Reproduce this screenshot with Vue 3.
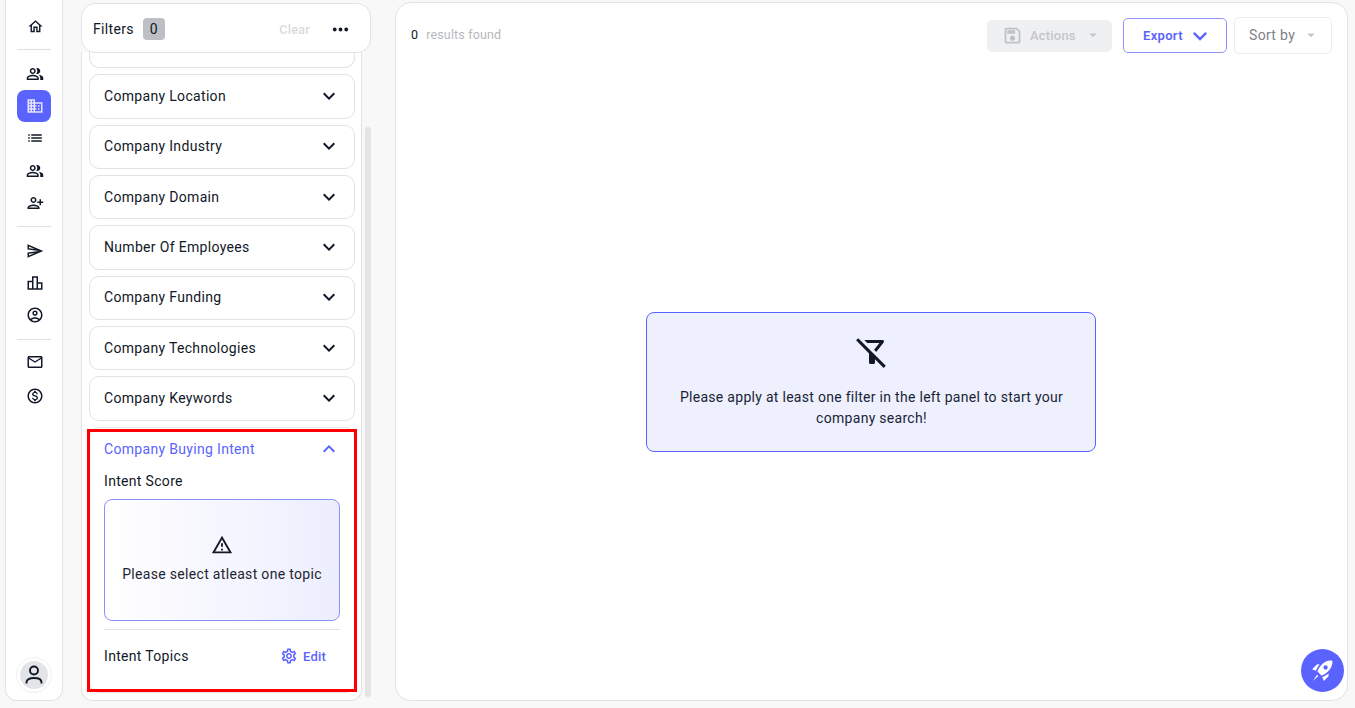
<script setup>
const P = {
  home: 'M12 5.69l5 4.5V18h-2v-6H9v6H7v-7.81l5-4.5M12 3L2 12h3v8h6v-6h2v6h6v-8h3L12 3z',
  people: 'M16.67 13.13C18.04 14.06 19 15.32 19 17v3h4v-3c0-2.18-3.57-3.47-6.33-3.87zM15 12c2.21 0 4-1.79 4-4s-1.79-4-4-4c-.47 0-.91.1-1.33.24C14.5 5.27 15 6.58 15 8s-.5 2.73-1.33 3.76c.42.14.86.24 1.33.24zM9 12c2.21 0 4-1.79 4-4s-1.79-4-4-4-4 1.79-4 4 1.79 4 4 4zm0-6c1.1 0 2 .9 2 2s-.9 2-2 2-2-.9-2-2 .9-2 2-2zM9 13c-2.67 0-8 1.34-8 4v3h16v-3c0-2.66-5.33-4-8-4zm6 5H3v-.99C3.2 16.29 6.3 15 9 15s5.8 1.29 6 2z',
  domain: 'M12 7V3H2v18h20V7H12zM6 19H4v-2h2v2zm0-4H4v-2h2v2zm0-4H4V9h2v2zm0-4H4V5h2v2zm4 12H8v-2h2v2zm0-4H8v-2h2v2zm0-4H8V9h2v2zm0-4H8V5h2v2zm10 12h-8v-2h2v-2h-2v-2h2v-2h-2V9h8v10zm-2-8h-2v2h2v-2zm0 4h-2v2h2v-2z',
  list: 'M3 13h2v-2H3v2zm0 4h2v-2H3v2zm0-8h2V7H3v2zm4 4h14v-2H7v2zm0 4h14v-2H7v2zM7 7v2h14V7H7z',
  add: 'M10 12c2.21 0 4-1.79 4-4s-1.79-4-4-4-4 1.79-4 4 1.79 4 4 4zm0-6c1.1 0 2 .9 2 2s-.9 2-2 2-2-.9-2-2 .9-2 2-2zm0 8c-2.67 0-8 1.34-8 4v2h16v-2c0-2.66-5.33-4-8-4zm-6 4c.22-.72 3.31-2 6-2 2.7 0 5.8 1.29 6 2H4zm16-3v-3h3v-2h-3V7h-2v3h-3v2h3v3h2z',
  send: 'M4.01 6.03l7.51 3.22-7.52-1 .01-2.22m7.5 8.72L4 17.97v-2.22l7.51-1M2.01 3L2 10l15 2-15 2 .01 7L23 12 2.01 3z',
  chart: 'M16 11V3H8v6H2v12h20V11h-6zm-6-6h4v14h-4V5zm-6 6h4v8H4v-8zm16 8h-4v-6h4v6z',
  account: 'M12 2C6.48 2 2 6.48 2 12s4.48 10 10 10 10-4.48 10-10S17.52 2 12 2zM7.35 18.5C8.66 17.56 10.26 17 12 17s3.34.56 4.65 1.5c-1.31.94-2.91 1.5-4.65 1.5s-3.34-.56-4.65-1.5zm10.79-1.38C16.45 15.8 14.32 15 12 15s-4.45.8-6.14 2.12C4.7 15.73 4 13.95 4 12c0-4.42 3.58-8 8-8s8 3.58 8 8c0 1.95-.7 3.73-1.86 5.12zM12 6c-1.93 0-3.5 1.57-3.5 3.5S10.07 13 12 13s3.5-1.57 3.5-3.5S13.93 6 12 6zm0 5c-.83 0-1.5-.67-1.5-1.5S11.17 8 12 8s1.5.67 1.5 1.5S12.83 11 12 11z',
  mail: 'M22 6c0-1.1-.9-2-2-2H4c-1.1 0-2 .9-2 2v12c0 1.1.9 2 2 2h16c1.1 0 2-.9 2-2V6zm-2 0l-8 5-8-5h16zm0 12H4V8l8 5 8-5v10z',
  money: 'M12 2C6.48 2 2 6.48 2 12s4.48 10 10 10 10-4.48 10-10S17.52 2 12 2zm0 18c-4.41 0-8-3.59-8-8s3.59-8 8-8 8 3.59 8 8-3.59 8-8 8zm.31-8.86c-1.77-.45-2.34-.94-2.34-1.67 0-.84.79-1.43 2.1-1.43 1.38 0 1.9.66 1.94 1.64h1.71c-.05-1.34-.87-2.57-2.49-2.97V5H10.9v1.69c-1.51.32-2.72 1.3-2.72 2.81 0 1.79 1.49 2.69 3.66 3.21 1.95.46 2.34 1.15 2.34 1.87 0 .53-.39 1.39-2.1 1.39-1.6 0-2.23-.72-2.32-1.64H8.04c.1 1.7 1.36 2.66 2.86 2.97V19h2.34v-1.67c1.52-.29 2.72-1.16 2.73-2.77-.01-2.2-1.9-2.96-3.66-3.42z',
  down: 'M16.59 8.59L12 13.17 7.41 8.59 6 10l6 6 6-6z',
  up: 'M12 8l-6 6 1.41 1.41L12 10.83l4.59 4.58L18 14z',
  caret: 'M7 10l5 5 5-5z',
  filterOff: 'M16.95 6l-3.57 4.55 1.43 1.43c1.03-1.31 4.98-6.37 4.98-6.37C20.3 4.95 19.83 4 19 4H6.83l2 2h8.12zM2.81 2.81 1.39 4.22 10 13v6c0 .55.45 1 1 1h2c.55 0 1-.45 1-1v-2.17l5.78 5.78 1.41-1.41L2.81 2.81z',
  warn: 'M12 5.99L19.53 19H4.47L12 5.99M12 2L1 21h22L12 2zm1 14h-2v2h2v-2zm0-6h-2v4h2v-4z',
  gear: 'M19.43 12.98c.04-.32.07-.64.07-.98 0-.34-.03-.66-.07-.98l2.11-1.65c.19-.15.24-.42.12-.64l-2-3.46c-.09-.16-.26-.25-.44-.25-.06 0-.12.01-.17.03l-2.49 1c-.52-.4-1.08-.73-1.69-.98l-.38-2.65C14.46 2.18 14.25 2 14 2h-4c-.25 0-.46.18-.49.42l-.38 2.65c-.61.25-1.17.59-1.69.98l-2.49-1c-.06-.02-.12-.03-.18-.03-.17 0-.34.09-.43.25l-2 3.46c-.13.22-.07.49.12.64l2.11 1.65c-.04.32-.07.65-.07.98 0 .33.03.66.07.98l-2.11 1.65c-.19.15-.24.42-.12.64l2 3.46c.09.16.26.25.44.25.06 0 .12-.01.17-.03l2.49-1c.52.4 1.08.73 1.69.98l.38 2.65c.03.24.24.42.49.42h4c.25 0 .46-.18.49-.42l.38-2.65c.61-.25 1.17-.59 1.69-.98l2.49 1c.06.02.12.03.18.03.17 0 .34-.09.43-.25l2-3.46c.12-.22.07-.49-.12-.64l-2.11-1.65zm-1.98-1.71c.04.31.05.52.05.73 0 .21-.02.43-.05.73l-.14 1.13.89.7 1.08.84-.7 1.21-1.27-.51-1.04-.42-.9.68c-.43.32-.84.56-1.25.73l-1.06.43-.16 1.13-.2 1.35h-1.4l-.19-1.35-.16-1.13-1.06-.43c-.43-.18-.83-.41-1.23-.71l-.91-.7-1.06.43-1.27.51-.7-1.21 1.08-.84.89-.7-.14-1.13c-.03-.31-.05-.54-.05-.74s.02-.43.05-.73l.14-1.13-.89-.7-1.08-.84.7-1.21 1.27.51 1.04.42.9-.68c.43-.32.84-.56 1.25-.73l1.06-.43.16-1.13.2-1.35h1.39l.19 1.35.16 1.13 1.06.43c.43.18.83.41 1.23.71l.91.7 1.06-.43 1.27-.51.7 1.21-1.07.85-.89.7.14 1.13zM12 8c-2.21 0-4 1.79-4 4s1.79 4 4 4 4-1.79 4-4-1.79-4-4-4zm0 6c-1.1 0-2-.9-2-2s.9-2 2-2 2 .9 2 2-.9 2-2 2z',
  save: 'M17 3H5c-1.11 0-2 .9-2 2v14c0 1.1.89 2 2 2h14c1.1 0 2-.9 2-2V7l-4-4zm2 16H5V5h11.17L19 7.83V19zm-7-7c-1.66 0-3 1.34-3 3s1.34 3 3 3 3-1.34 3-3-1.34-3-3-3zM6 6h9v4H6z',
  dots: 'M6 10c-1.1 0-2 .9-2 2s.9 2 2 2 2-.9 2-2-.9-2-2-2zm12 0c-1.1 0-2 .9-2 2s.9 2 2 2 2-.9 2-2-.9-2-2-2zm-6 0c-1.1 0-2 .9-2 2s.9 2 2 2 2-.9 2-2-.9-2-2-2z',
  rocket: 'M9.19 6.35c-2.04 2.29-3.44 5.58-3.57 5.89L2 10.69l4.05-4.05c.47-.47 1.15-.68 1.81-.55l1.33.26zM11.17 17s3.74-1.55 5.89-3.7c5.4-5.4 4.5-9.62 4.21-10.57-.95-.3-5.17-1.19-10.57 4.21C8.55 9.09 7 12.83 7 12.83L11.17 17zm6.48-2.19c-2.29 2.04-5.58 3.44-5.89 3.57L13.31 22l4.05-4.05c.47-.47.68-1.15.55-1.81l-.26-1.33zM8 17.2L2.600 22 6.800 16zM13 9c0-1.1.9-2 2-2s2 .9 2 2-.9 2-2 2-2-.9-2-2z'
}
const navGroups = [
  [{ i: 'home', s: 17 }],
  [{ i: 'people' }, { i: 'domain', active: true }, { i: 'list' }, { i: 'people' }, { i: 'add' }],
  [{ i: 'send' }, { i: 'chart' }, { i: 'account' }],
  [{ i: 'mail' }, { i: 'money' }]
]
const filters = ['Company Location', 'Company Industry', 'Company Domain', 'Number Of Employees', 'Company Funding', 'Company Technologies', 'Company Keywords']
</script>

<template>
  <div class="page">
    <aside class="rail">
      <template v-for="(g, gi) in navGroups" :key="gi">
        <hr v-if="gi" class="rail-rule" />
        <div class="rail-group" :class="{ first: gi === 0, spaced: gi === 3 }">
          <div v-for="(n, ni) in g" :key="ni" class="rail-item" :class="{ active: n.active }">
            <svg viewBox="0 0 24 24" :width="n.s || 18" :height="n.s || 18"><path :d="P[n.i]" /></svg>
          </div>
        </div>
      </template>
      <div class="avatar-ring">
        <div class="avatar">
          <svg viewBox="0 0 24 24" width="24" height="24" fill="none" stroke="#111827" stroke-width="1.9">
            <circle cx="12" cy="7.5" r="4" />
            <path d="M4.5 20.5v-1.2c0-2.6 3-4.3 7.5-4.3s7.500 1.700 7.500 4.300v1.200" />
          </svg>
        </div>
      </div>
    </aside>

    <section class="filters">
      <header class="filters-head">
        <span class="filters-title">Filters</span>
        <span class="badge">0</span>
        <span class="clear">Clear</span>
        <svg class="dots" viewBox="0 0 24 24" width="23" height="23"><path :d="P.dots" /></svg>
      </header>
      <div class="filters-body">
        <div class="panel">
          <div class="cut-item"></div>
          <div v-for="f in filters" :key="f" class="item">
            <div class="item-head">
              <span>{{ f }}</span>
              <svg viewBox="0 0 24 24" width="24" height="24"><path :d="P.down" /></svg>
            </div>
          </div>
          <div class="item open">
            <div class="item-head">
              <span>Company Buying Intent</span>
              <svg viewBox="0 0 24 24" width="24" height="24"><path :d="P.up" /></svg>
            </div>
            <div class="item-body">
              <div class="label">Intent Score</div>
              <div class="notice">
                <svg viewBox="0 0 24 24" width="22" height="22"><path :d="P.warn" /></svg>
                <span>Please select atleast one topic</span>
              </div>
              <div class="topics">
                <span>Intent Topics</span>
                <span class="edit">
                  <svg viewBox="0 0 24 24" width="18" height="18"><path :d="P.gear" /></svg>
                  Edit
                </span>
              </div>
            </div>
          </div>
          <div class="red-box"></div>
        </div>
        <div class="scroll-track"><div class="scroll-thumb"></div></div>
      </div>
    </section>

    <main class="main">
      <div class="toolbar">
        <div class="count"><b>0</b><span>results found</span></div>
        <div class="actions">
          <svg viewBox="0 0 24 24" width="21" height="21"><path :d="P.save" /></svg>
          <span>Actions</span>
          <svg class="tri" viewBox="0 0 24 24" width="18" height="18"><path :d="P.caret" /></svg>
        </div>
        <div class="export">
          <span>Export</span>
          <svg viewBox="0 0 24 24" width="28" height="28"><path :d="P.down" /></svg>
        </div>
        <div class="sort">
          <span>Sort by</span>
          <svg class="tri" viewBox="0 0 24 24" width="18" height="18"><path :d="P.caret" /></svg>
        </div>
      </div>
      <div class="empty-wrap">
        <div class="empty">
          <svg viewBox="0 0 24 24" width="36" height="36"><path :d="P.filterOff" /></svg>
          <p>Please apply at least one filter in the left panel to start your company search!</p>
        </div>
      </div>
    </main>

    <div class="fab">
      <svg viewBox="0 0 24 24" width="25" height="25"><path :d="P.rocket" /></svg>
    </div>
  </div>
</template>

<style>
html, body { margin: 0; background: #f8f8f8; overflow: hidden; }
</style>

<style scoped>
* { box-sizing: border-box; }
.page {
  position: relative;
  display: flex;
  height: 708px;
  width: 1355px;
  overflow: hidden;
  background: #f8f8f8;
  font-family: Roboto, "Liberation Sans", sans-serif;
  font-size: 14px;
  letter-spacing: 0.32px;
  color: #111827;
}
.rail {
  width: 58px;
  height: 701px;
  margin-left: 5px;
  padding: 0 11px;
  display: flex;
  flex-direction: column;
  background: #fff;
  border: 1px solid #e2e2e2;
  border-top: 0;
  border-radius: 0 0 12px 12px;
}
.rail-group { display: flex; flex-direction: column; }
.rail-group.first { padding-top: 10px; }
.rail-group.spaced { gap: 2px; margin-top: -2px; }
.rail-item {
  height: 32.2px;
  padding-left: 2px;
  display: flex;
  align-items: center;
  justify-content: center;
  border-radius: 8px;
}
.rail-item svg { fill: #111827; }
.rail-item.active { height: 32px; background: #5b63ff; }
.rail-item.active svg { fill: #e4e6ff; }
.rail-rule {
  width: 100%;
  height: 1px;
  margin: 7px 0 8px;
  border: 0;
  background: #e0e0e0;
}
.avatar-ring {
  margin-top: auto;
  margin-bottom: 7px;
  align-self: center;
  width: 36px;
  height: 36px;
  padding: 3px;
  border-radius: 50%;
  background: #fff;
  border: 1px solid #f1f1f3;
}
.avatar {
  width: 28px;
  height: 28px;
  border-radius: 50%;
  background: #e3e4e8;
  display: flex;
  align-items: center;
  justify-content: center;
}
.filters {
  width: 290px;
  margin-left: 18px;
  height: 701px;
  display: flex;
  flex-direction: column;
}
.filters-head {
  position: relative;
  z-index: 2;
  margin-top: 3px;
  height: 50px;
  flex: none;
  display: flex;
  align-items: center;
  padding: 2px 18px 0 11px;
  background: #fff;
  border: 1px solid #e2e2e2;
  border-radius: 14px;
}
.filters-title { font-size: 14px; }
.badge {
  margin-left: 9px;
  width: 22px;
  height: 22px;
  border-radius: 4px;
  background: #bcc0c5;
  display: flex;
  align-items: center;
  justify-content: center;
}
.clear {
  margin-left: auto;
  font-size: 12.5px;
  font-weight: 500;
  color: #dadbde;
}
.dots { margin-left: 19px; fill: #111827; }
.filters-body {
  flex: 1;
  min-height: 0;
  display: flex;
  gap: 3px;
}
.panel {
  position: relative;
  width: 281px;
  margin-top: -1px;
  padding: 0 6px 0 7px;
  display: flex;
  flex-direction: column;
  gap: 6px;
  background: #fff;
  border: 1px solid #e2e2e2;
  border-top: 0;
  border-radius: 0 0 12px 12px;
}
.cut-item {
  flex: none;
  height: 16.3px;
  border: 1px solid #e2e2e2;
  border-top: 0;
  border-radius: 0 0 10px 10px;
}
.item {
  flex: none;
  min-height: 44.33px;
  border: 1px solid #e2e2e2;
  border-radius: 10px;
}
.item-head {
  height: 42.33px;
  padding: 0 13px 1px 14px;
  display: flex;
  align-items: center;
  justify-content: space-between;
}
.item-head svg { fill: #111827; }
.item.open { height: 266px; }
.item.open .item-head { color: #5b63ff; padding-bottom: 0; }
.item.open .item-head svg { fill: #5b63ff; }
.item-body { padding: 0 14px; }
.label { height: 20px; margin-top: 0.7px; line-height: 20px; }
.notice {
  margin-top: 8px;
  height: 122px;
  padding-bottom: 4px;
  display: flex;
  flex-direction: column;
  align-items: center;
  justify-content: center;
  gap: 10px;
  border: 1px solid #8b90ff;
  border-radius: 8px;
  background: linear-gradient(90deg, #ffffff 0%, #eceefd 100%);
  color: #1f2533;
}
.notice svg { fill: #111827; }
.topics {
  margin-top: 8px;
  height: 54px;
  padding-right: 14px;
  display: flex;
  align-items: center;
  justify-content: space-between;
  border-top: 1px solid #e2e2e2;
}
.edit {
  display: flex;
  align-items: center;
  gap: 5px;
  font-size: 13px;
  font-weight: 500;
  letter-spacing: 0.2px;
  color: #5b63ff;
}
.edit svg { fill: #5b63ff; }
.red-box {
  position: absolute;
  left: 5px;
  top: 377px;
  width: 270px;
  height: 263px;
  border: 3px solid #f00;
  pointer-events: none;
}
.scroll-track { width: 6px; padding: 74px 0 4px; }
.scroll-thumb { height: 100%; background: #e4e4e4; border-radius: 3px; }
.main {
  width: 953px;
  margin: 2px 0 0 24px;
  height: 699px;
  display: flex;
  flex-direction: column;
  background: #fff;
  border: 1px solid #e2e2e2;
  border-radius: 16px;
}
.toolbar {
  height: 60px;
  flex: none;
  padding: 14px 15px 0 15px;
  display: flex;
  align-items: flex-start;
}
.count {
  margin-right: auto;
  height: 34px;
  display: flex;
  align-items: center;
  gap: 8px;
  font-size: 12.5px;
  letter-spacing: 0.15px;
}
.count b { font-weight: 400; color: #111827; }
.count span { color: #b7b9bd; }
.actions {
  width: 125px;
  height: 32px;
  margin-top: 3px;
  padding: 0 0 2px 15px;
  display: flex;
  align-items: center;
  border-radius: 5px;
  background: #eff0f2;
  font-size: 13px;
  font-weight: 500;
  letter-spacing: 0.2px;
  color: #c4c6ca;
}
.actions svg:first-child { fill: #bfc1c6; }
.actions span { margin-left: 7px; }
.tri { fill: #c4c6ca; }
.actions .tri { margin-left: 8px; }
.export {
  width: 104px;
  height: 35px;
  margin: 1px 0 0 11px;
  padding-left: 19px;
  display: flex;
  align-items: center;
  border: 1px solid #8f93ff;
  border-radius: 5px;
  font-size: 13px;
  font-weight: 600;
  color: #5b63ff;
}
.export svg { margin-left: 3px; fill: #5b63ff; }
.sort {
  width: 98px;
  height: 37px;
  margin-left: 7px;
  padding: 0 0 2px 14px;
  display: flex;
  align-items: center;
  border: 1px solid #ececef;
  border-radius: 5px;
  color: #7f8186;
}
.sort .tri { margin-left: 7px; }
.empty-wrap {
  flex: 1;
  padding-right: 2px;
  display: flex;
  align-items: center;
  justify-content: center;
}
.empty {
  width: 450px;
  height: 140px;
  padding: 21px 28px 0 30px;
  text-align: center;
  background: #eef0fd;
  border: 1px solid #5b63ff;
  border-radius: 8px;
}
.empty svg { display: block; margin: 0 auto; fill: #111827; }
.empty p { margin: 17px 0 0; line-height: 21px; letter-spacing: 0.29px; color: #1a1f36; }
.fab {
  position: absolute;
  left: 1301px;
  top: 649px;
  width: 43px;
  height: 43px;
  border-radius: 50%;
  background: #5b63ff;
  display: flex;
  align-items: center;
  justify-content: center;
}
.fab svg { fill: #fff; }
</style>
